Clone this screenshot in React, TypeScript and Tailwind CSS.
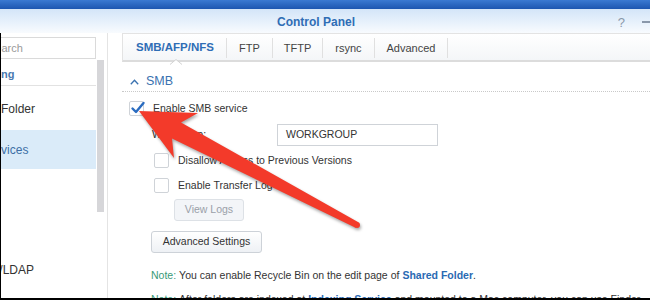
import React from "react";

function Checkbox({ checked = false }: { checked?: boolean }) {
  return (
    <div className="relative w-[15px] h-[15px] shrink-0 rounded-[2px] border border-[#cfd3d8] bg-white">
      {checked && (
        <svg className="absolute left-[0px] top-[-2px]" width="16" height="16" viewBox="0 0 16 16">
          <path d="M2.5 8.5 L6 12 L13.5 3" fill="none" stroke="#2a6cc0" strokeWidth="2.4" strokeLinecap="round" strokeLinejoin="round" />
        </svg>
      )}
    </div>
  );
}

export default function App() {
  return (
    <div className="relative w-[650px] h-[300px] overflow-hidden bg-white font-['Liberation_Sans',Arial,sans-serif] text-[#333]">
      {/* window top */}
      <div className="h-[9px] bg-gradient-to-b from-[#3b7ad2] to-[#1d56b0]" />
      <div className="h-[24px] flex items-center pt-[2px] overflow-hidden bg-gradient-to-b from-[#d3e5f8] to-[#f8fbfe]">
        <div className="ml-[277px] text-[12px] font-bold text-[#2f6db5] whitespace-nowrap">Control Panel</div>
        <div className="ml-auto text-[13px] text-[#8a98aa] leading-none">?</div>
        <div className="ml-[17px] mr-[-6px] w-[14px] h-[1.5px] bg-[#8a98aa] shrink-0" />
      </div>

      <div className="flex h-[265px]">
        {/* sidebar */}
        <div className="w-[108px] shrink-0 border-l border-black border-r border-r-[#e4e4e4] overflow-hidden flex flex-col">
          <div className="mt-[4px] h-[22px] w-[95px] shrink-0 border border-l-0 border-[#dadada] flex items-center overflow-hidden">
            <span className="ml-[-13px] text-[11px] text-[#9a9a9a] whitespace-nowrap">Search</span>
          </div>
          <div className="flex flex-1 mt-[1px]">
            <div className="w-[95px] flex flex-col overflow-hidden">
              <div className="h-[26px] shrink-0 border-b border-[#e2e2e2] flex items-center pt-[3px] overflow-hidden">
                <span className="ml-[-49.5px] text-[11px] font-bold text-[#4a78b0] whitespace-nowrap">File Sharing</span>
              </div>
              <div className="h-[44px] shrink-0 flex items-center pt-[2px] overflow-hidden">
                <span className="ml-[-42px] text-[12px] text-[#333] whitespace-nowrap">Shared Folder</span>
              </div>
              <div className="h-[39px] shrink-0 bg-[#daebf9] flex items-center overflow-hidden">
                <span className="ml-[-41.3px] text-[12px] text-[#3d6fa6] whitespace-nowrap">File Services</span>
              </div>
              <div className="h-[40px] shrink-0" />
              <div className="h-[40px] shrink-0" />
              <div className="h-[42px] shrink-0 flex items-center overflow-hidden">
                <span className="ml-[-43px] text-[12px] text-[#333] whitespace-nowrap">Domain/LDAP</span>
              </div>
            </div>
            <div className="w-[11px] pl-[1px]">
              <div className="w-[7px] h-[152px] bg-[#d6d6d9]" />
            </div>
          </div>
        </div>

        {/* main */}
        <div className="flex-1 pl-[14px] flex flex-col overflow-hidden">
          {/* tabs */}
          <div className="h-[29px] shrink-0 border-l border-t border-[#e3e3e3] border-b-2 border-b-[#dcdcdc] bg-gradient-to-b from-white to-[#f4f6f8] flex items-center pt-[2px] text-[11px] text-[#444] whitespace-nowrap">
            <div className="relative h-[20px] flex items-center pl-[13px] pr-[12px] border-r border-[#e0e0e0] font-bold text-[11.5px] text-[#2f6db5]">
              SMB/AFP/NFS
              <svg className="absolute left-[47px] top-[21px]" width="12" height="6" viewBox="0 0 12 6">
                <path d="M0 6 L6 0.5 L12 6 Z" fill="#ffffff" />
                <path d="M0 5.5 L6 0.5 L12 5.5" fill="none" stroke="#d2d2d2" strokeWidth="1" />
              </svg>
            </div>
            <div className="h-[20px] flex items-center px-[12px] border-r border-[#e0e0e0]">FTP</div>
            <div className="h-[20px] flex items-center px-[11px] border-r border-[#e0e0e0]">TFTP</div>
            <div className="h-[20px] flex items-center px-[12px] border-r border-[#e0e0e0]">rsync</div>
            <div className="h-[20px] flex items-center px-[12px] border-r border-[#e0e0e0]">Advanced</div>
          </div>

          {/* SMB section header */}
          <div className="h-[30px] shrink-0 pt-[10px] flex items-center border-b border-dotted border-[#c9c9c9]">
            <svg className="ml-[8px]" width="9" height="6" viewBox="0 0 9 6">
              <path d="M0.8 5.2 L4.5 1.2 L8.2 5.2" fill="none" stroke="#3a72b0" strokeWidth="1.3" />
            </svg>
            <span className="ml-[7px] text-[12.5px] text-[#3a72b0]">SMB</span>
          </div>

          {/* body */}
          <div className="flex flex-col shrink-0 text-[10.5px] text-[#333]">
            <div className="mt-[9px] ml-[7px] flex items-center gap-[9px]">
              <Checkbox checked />
              <span>Enable SMB service</span>
            </div>
            <div className="mt-[7px] ml-[30px] flex items-center">
              <span className="w-[125px]">Workgroup:</span>
              <div className="w-[161px] h-[22px] border border-[#cfd3d8] flex items-center pl-[8px]">WORKGROUP</div>
            </div>
            <div className="mt-[7px] ml-[32px] flex items-center gap-[9px]">
              <Checkbox />
              <span>Disallow Access to Previous Versions</span>
            </div>
            <div className="mt-[9px] ml-[32px] flex items-center gap-[9px]">
              <Checkbox />
              <span>Enable Transfer Log</span>
            </div>
            <div className="mt-[6px] ml-[52px]">
              <div className="w-[70px] h-[22px] rounded-[3px] border border-[#dde1e6] bg-[#f3f5f8] flex items-center justify-center text-[#9aa0a8]">View Logs</div>
            </div>
            <div className="mt-[10px] ml-[29px]">
              <div className="w-[111px] h-[22px] rounded-[3px] border border-[#cdd2d8] bg-gradient-to-b from-white to-[#eef1f5] flex items-center justify-center text-[#333]">Advanced Settings</div>
            </div>
            <div className="mt-[16px] ml-[29px] h-[14px] flex items-center whitespace-nowrap">
              <span className="text-[#3a9a78]">Note:</span>
              <span className="ml-[3px]">You can enable Recycle Bin on the edit page of </span>
              <span className="ml-[3px] font-bold text-[#2a6ab3]">Shared Folder</span>
              <span>.</span>
            </div>
            <div className="mt-[10px] ml-[29px] h-[14px] flex items-center whitespace-nowrap">
              <span className="text-[#3a9a78]">Note:</span>
              <span className="ml-[3px]">After folders are indexed at </span>
              <span className="ml-[3px] font-bold text-[#2a6ab3]">Indexing Service</span>
              <span className="ml-[3px]">and mounted to a Mac computer, you can use Finder</span>
            </div>
          </div>
        </div>
      </div>
      <div className="h-[2px] bg-black" />

      {/* annotation arrow */}
      <svg className="absolute inset-0 pointer-events-none" width="650" height="300" viewBox="0 0 650 300" style={{ filter: "drop-shadow(1px 2px 1.5px rgba(0,0,0,0.35))" }}>
        <polygon
          points="139,111 198,113 181,122.4 358.4,222.3 355.6,227.7 172,138.4 174,158"
          fill="#f33a2a"
        />
        <circle cx="357" cy="225" r="3" fill="#f33a2a" />
      </svg>
    </div>
  );
}
